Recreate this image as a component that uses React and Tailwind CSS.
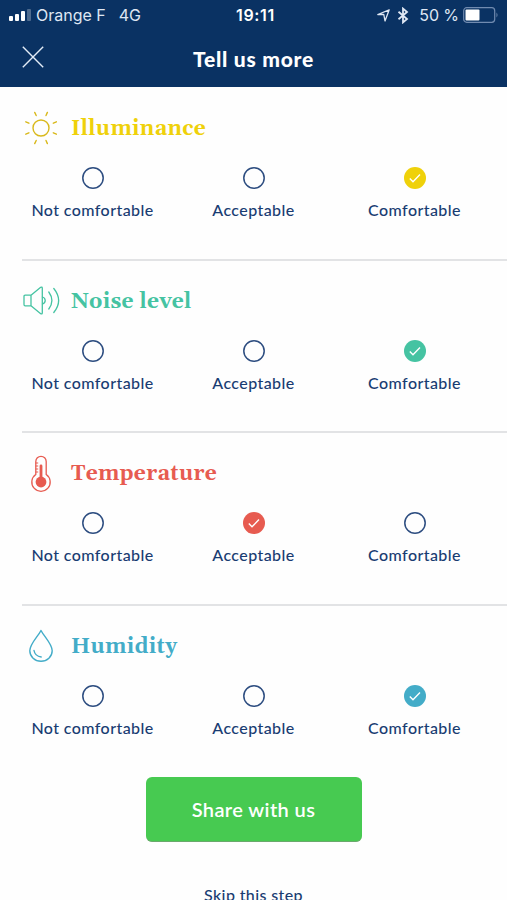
import React from 'react';

function SunIcon() {
  return (
    <svg width="38" height="38" viewBox="0 0 38 38" fill="none" stroke="currentColor" strokeWidth="1.4" strokeLinecap="round">
      <circle cx="19" cy="19" r="8" />
      <path d="M14.2 6.5L12.7 3.4M24 6.5L25.4 3.4M14.2 31.5L12.7 34.6M24 31.5L25.4 34.6M6.9 14.2L3.8 12.8M6.9 23.8L3.8 25.2M31.3 14.2L34.4 12.8M31.3 23.8L34.4 25.2" />
    </svg>
  );
}

function SpeakerIcon() {
  return (
    <svg width="38" height="38" viewBox="0 0 38 38" fill="none" stroke="currentColor" strokeWidth="1.3" strokeLinecap="round" strokeLinejoin="round">
      <path d="M9 14.2H3.2Q2 14.2 2 15.5V23.5Q2 24.8 3.2 24.8H9ZM9 14.2L18.7 6.3Q20.3 5.5 20.3 7.3V31.7Q20.3 33.5 18.7 32.7L9 24.8" />
      <path d="M20.5 16Q23.2 16.9 23.2 19.5T20.5 23M26.8 11Q33 19.5 26.8 28M31.8 7.5Q41.5 19.5 31.8 31.5" />
    </svg>
  );
}

function ThermometerIcon() {
  return (
    <svg width="38" height="38" viewBox="0 0 38 38" fill="none" stroke="currentColor" strokeWidth="1.3" strokeLinecap="round">
      <path d="M13.8 20.5V7.5A5.2 5.2 0 0 1 24.2 7.5V20.5A9.2 9.2 0 1 1 13.8 20.5Z" />
      <circle cx="19" cy="28" r="5.4" fill="currentColor" stroke="none" />
      <path d="M19 12V26" strokeWidth="2.8" />
      <path d="M14 9H15.8M14 12H15.8M14 15H15.8M14 18H15.8" strokeWidth="1" />
    </svg>
  );
}

function DropIcon() {
  return (
    <svg width="38" height="38" viewBox="0 0 38 38" fill="none" stroke="currentColor" strokeWidth="1.4" strokeLinecap="round" strokeLinejoin="round">
      <path d="M19 4.5C16 10.5 7.8 18 7.8 24.8A11.2 10.4 0 0 0 30.2 24.8C30.2 18 22 10.5 19 4.5Z" />
      <path d="M12 24.5Q13 30.3 19.2 31" />
    </svg>
  );
}

const OPTIONS = ['Not comfortable', 'Acceptable', 'Comfortable'];

const SECTIONS = [
  { title: 'Illuminance', Icon: SunIcon, color: 'text-[#efd10a]', iconColor: 'text-[#d9b91c]', selected: 2 },
  { title: 'Noise level', Icon: SpeakerIcon, color: 'text-[#45c3a2]', iconColor: 'text-[#45c3a2]', selected: 2 },
  { title: 'Temperature', Icon: ThermometerIcon, color: 'text-[#e75b50]', iconColor: 'text-[#e75b50]', selected: 1 },
  { title: 'Humidity', Icon: DropIcon, color: 'text-[#43acc8]', iconColor: 'text-[#43acc8]', selected: 2 },
];

function Radio({ checked, color }) {
  return (
    <svg width="22" height="22" viewBox="0 0 22 22" fill="none" className={checked ? color : 'text-[#2d4d80]'}>
      {checked ? (
        <>
          <circle cx="11" cy="11" r="11" fill="currentColor" />
          <path d="M5.8 11.6L9 14.7L16 7.6" stroke="white" strokeWidth="1.4" />
        </>
      ) : (
        <circle cx="11" cy="11" r="10.2" stroke="currentColor" strokeWidth="1.5" />
      )}
    </svg>
  );
}

function Section({ title, Icon, color, iconColor, selected, last }) {
  return (
    <section className="h-[172.5px] shrink-0 flex flex-col">
      <div className="h-[41px] mt-5 pl-[22px] flex items-center">
        <span className={`w-[38px] shrink-0 ${iconColor}`}><Icon /></span>
        <h2 className={`ml-[11px] pt-[3px] font-['Gelasio','Georgia','DejaVu_Serif',serif] font-bold text-[21px] leading-6 tracking-[0.34px] whitespace-nowrap ${color}`}>{title}</h2>
      </div>
      <div className="mt-[19px] ml-3 w-[483px] grid grid-cols-3">
        {OPTIONS.map((label, i) => (
          <div key={label} className="flex flex-col items-center">
            <Radio checked={i === selected} color={color} />
            <span className="mt-[11px] text-base leading-5 font-medium tracking-[0.42px] whitespace-nowrap">{label}</span>
          </div>
        ))}
      </div>
      {!last && <div className="mt-auto ml-[22px] h-0.5 translate-y-px bg-[#e2e3e5]" />}
    </section>
  );
}

function StatusBar() {
  return (
    <div className="h-[30px] grid grid-cols-3 items-center pl-[9px] pr-2 text-[#dfe7f3] font-['Inter','Roboto',sans-serif]">
      <div className="flex items-center whitespace-nowrap">
        <svg width="23" height="14" viewBox="0 0 23 14" fill="white">
          <rect x="0" y="8" width="4" height="5" rx="1" />
          <rect x="6" y="6" width="4" height="7" rx="1" />
          <rect x="12" y="3" width="4" height="10" rx="1" />
          <rect x="18" y="1" width="4" height="12" rx="1" opacity=".28" />
        </svg>
        <span className="ml-1 text-base">Orange F</span>
        <span className="ml-[13px] text-base">4G</span>
      </div>
      <div className="text-center font-semibold text-base tracking-[0.7px] pl-[3px] text-white">19:11</div>
      <div className="flex items-center justify-end">
        <svg width="13" height="13" viewBox="0 0 13 13" fill="none" stroke="currentColor" strokeWidth="1.3" strokeLinejoin="round">
          <path d="M.8 5.5L12.2 .8L8 12L6.8 5.5Z" />
        </svg>
        <svg className="ml-[7px] mr-0.5" width="12" height="17" viewBox="0 0 12 17" fill="none" stroke="currentColor" strokeWidth="1.8">
          <path d="M1.5 4.8L10 12L6 15.4V1.6L10 5L1.5 12.2" />
        </svg>
        <span className="ml-2 text-base tracking-[-0.1px] whitespace-nowrap">50 %</span>
        <svg className="ml-1" width="36" height="16" viewBox="0 0 36 16">
          <rect x=".7" y=".7" width="31" height="14.6" rx="3" fill="none" stroke="#718bb0" strokeWidth="1.2" />
          <rect x="2.5" y="2.5" width="14" height="11" rx="1" fill="white" />
          <path d="M33.5 5.5Q35.5 8 33.5 10.5Z" fill="#718bb0" />
        </svg>
      </div>
    </div>
  );
}

export default function App() {
  return (
    <main className="w-[507px] h-[900px] overflow-hidden flex flex-col bg-[#fefefe] text-[#193c72] font-['Lato',sans-serif]">
      <header className="h-[87px] shrink-0 bg-[#0a3263] text-white">
        <StatusBar />
        <div className="h-[55px] px-[22px] grid grid-cols-[22px_1fr_22px] items-center">
          <svg width="22" height="22" viewBox="0 0 22 22" fill="none" stroke="#e3ecf7" strokeWidth="1.4" className="mb-0.5">
            <path d="M.8 .8L21.2 21.2M21.2 .8L.8 21.2" />
          </svg>
          <h1 className="pt-0.5 text-center text-[21px] leading-7 font-black tracking-[0.75px]">Tell us more</h1>
        </div>
      </header>
      {SECTIONS.map((section, i) => (
        <Section key={section.title} {...section} last={i === SECTIONS.length - 1} />
      ))}
      <div className="shrink-0 flex flex-col items-center">
        <button className="w-[216px] h-[65px] rounded-md bg-[#47ca51] border-b border-[#6aa96c] text-white text-xl font-semibold tracking-[0.4px]">Share with us</button>
        <button className="mt-[41px] text-base leading-6 font-medium tracking-[0.38px] whitespace-nowrap">Skip this step</button>
      </div>
    </main>
  );
}
